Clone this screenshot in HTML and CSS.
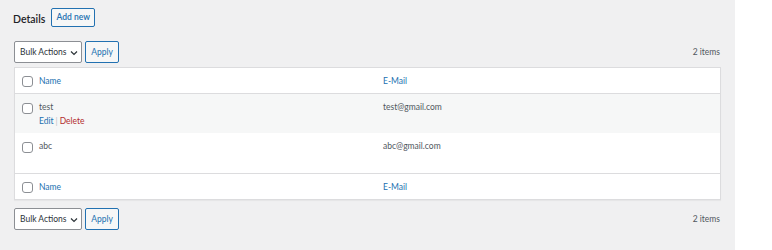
FILE: index.html
```html
<!DOCTYPE html>
<html>
<head>
<meta charset="utf-8">
<link rel="stylesheet" href="styles.css">
</head>
<body>
<div class="wrap">
  <div class="heading">
    <h1 class="title">Details</h1>
    <button class="btn-outline">Add new</button>
  </div>
  <div class="tablenav">
    <div class="actions">
      <div class="select">Bulk Actions <svg class="chev" width="8" height="6" viewBox="0 0 8 6"><path d="M1 1.5 L4 4.5 L7 1.5" fill="none" stroke="#2c3338" stroke-width="1.2"/></svg></div>
      <button class="btn-apply">Apply</button>
    </div>
    <span class="count">2 items</span>
  </div>
  <div class="table">
    <div class="row head">
      <div class="cb"><span class="box"></span></div>
      <div class="col name link">Name</div>
      <div class="col email link">E-Mail</div>
    </div>
    <div class="row item alt">
      <div class="cb"><span class="box"></span></div>
      <div class="col name">test<div class="rowactions"><span class="link">Edit</span><span class="sep">|</span><span class="del">Delete</span></div></div>
      <div class="col email">test@gmail.com</div>
    </div>
    <div class="row item">
      <div class="cb"><span class="box"></span></div>
      <div class="col name">abc</div>
      <div class="col email">abc@gmail.com</div>
    </div>
    <div class="row foot">
      <div class="cb"><span class="box"></span></div>
      <div class="col name link">Name</div>
      <div class="col email link">E-Mail</div>
    </div>
  </div>
  <div class="tablenav bottom">
    <div class="actions">
      <div class="select">Bulk Actions <svg class="chev" width="8" height="6" viewBox="0 0 8 6"><path d="M1 1.5 L4 4.5 L7 1.5" fill="none" stroke="#2c3338" stroke-width="1.2"/></svg></div>
      <button class="btn-apply">Apply</button>
    </div>
    <span class="count">2 items</span>
  </div>
</div>
</body>
</html>
```
FILE: styles.css
```css
html, body { margin: 0; padding: 0; background: #fff; }
body { font-family: "Lato", "Open Sans", sans-serif; font-size: 8.5px; line-height: 11px; color: #50575e; }
.wrap { width: 735px; height: 250px; background: #f0f0f1; box-sizing: border-box; padding: 8px 14px 0 14px; }
.wrap > * { width: 707px; }
.heading { display: flex; align-items: center; gap: 6px; height: 19px; margin-left: -1px; }
.title { margin: 0; font-size: 10.5px; font-weight: 600; color: #1d2327; padding-top: 3px; }
.btn-outline { font: inherit; font-size: 8.5px; font-weight: 600; color: #2271b1; background: #f6f7f7; border: 1px solid #2271b1; border-radius: 2px; height: 19px; width: 44px; padding: 0; white-space: nowrap; }
.tablenav { display: flex; justify-content: space-between; align-items: center; margin-top: 14px; height: 22px; }
.tablenav.bottom { margin-top: 8px; }
.actions { display: flex; gap: 3px; }
.select { box-sizing: border-box; width: 68px; height: 22px; border: 1px solid #8c8f94; border-radius: 2px; background: #fff; color: #2c3338; display: flex; align-items: center; padding-left: 5px; gap: 3px; white-space: nowrap; }
.chev { margin-top: 1px; }
.btn-apply { font: inherit; box-sizing: border-box; width: 34px; height: 22px; border: 1px solid #2271b1; border-radius: 2px; background: #f6f7f7; color: #2271b1; padding: 0; }
.count { color: #50575e; padding-right: 1px; }
.table { margin-top: 4px; background: #fff; border: 1px solid #dcdcde; box-shadow: 0 1px 1px rgba(0,0,0,0.04); box-sizing: border-box; }
.row { display: grid; grid-template-columns: 24px 344px 1fr; }
.row.head { height: 24px; padding-top: 1px; border-bottom: 1px solid #dcdcde; align-items: center; }
.row.foot { height: 24px; padding-top: 1px; border-top: 1px solid #dcdcde; align-items: center; }
.row.item { height: 39px; }
.row.item.alt { background: #f6f7f7; }
.row.item + .row.item { height: 40px; }
.cb { display: flex; justify-content: center; padding-left: 1px; }
.row.item .cb { padding-top: 9px; align-items: flex-start; }
.box { box-sizing: border-box; width: 11px; height: 11px; border: 1px solid #8c8f94; border-radius: 3px; background: #fff; display: block; }
.row.item .col { padding-top: 8px; color: #50575e; }
.link { color: #2271b1; }
.rowactions { margin-top: 3px; }
.sep { color: #c3c4c7; margin: 0 2px; }
.del { color: #b32d2e; }
```
